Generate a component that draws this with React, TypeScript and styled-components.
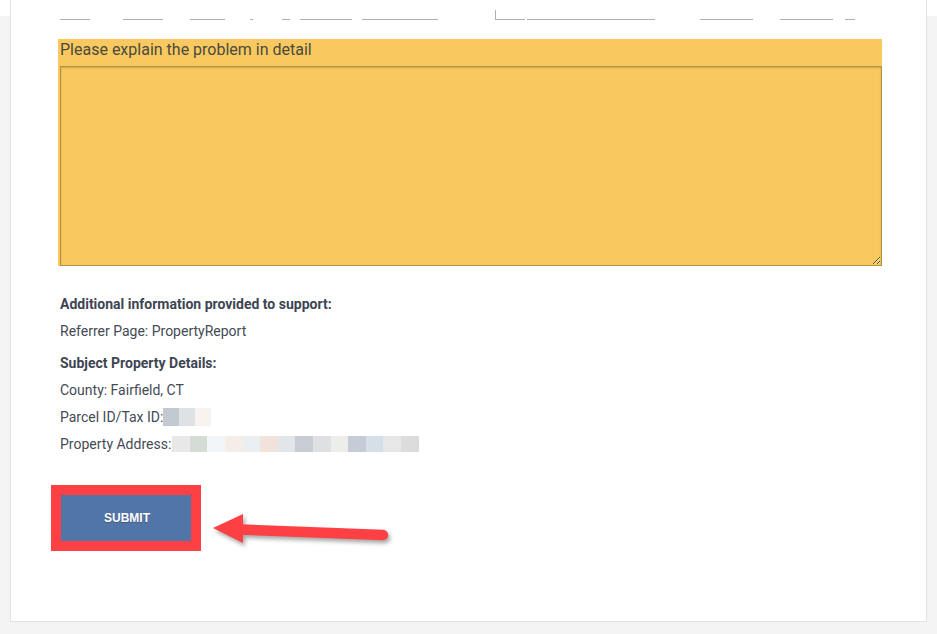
import React from "react";
import styled, { createGlobalStyle } from "styled-components";

const GlobalStyle = createGlobalStyle`
  html, body {
    margin: 0;
    padding: 0;
  }
  body {
    background: linear-gradient(#ffffff 0, #ffffff 16px, #f4f4f4 16px);
    font-family: Roboto, "Liberation Sans", Arial, sans-serif;
    color: #444b55;
    height: 634px;
    overflow: hidden;
  }
`;

const Page = styled.div`
  width: 937px;
  height: 634px;
  box-sizing: border-box;
  padding: 0 10px 0 10px;
`;

const Card = styled.div`
  width: 917px;
  box-sizing: border-box;
  background: #ffffff;
  border: 1px solid #e2e2e2;
  border-top: none;
  padding: 0 44px 70px 47px;
`;

/* bottom edges of the fields scrolled above the form */
const FieldsRow = styled.div`
  display: flex;
  align-items: flex-end;
  height: 20px;
  margin-left: 2px;
`;

const Underline = styled.span<{ $w: number; $gap: number; $tick?: boolean }>`
  display: block;
  width: ${(p) => p.$w}px;
  margin-left: ${(p) => p.$gap}px;
  height: ${(p) => (p.$tick ? "10px" : "1px")};
  border-bottom: 1px solid #b0b0b0;
  border-left: ${(p) => (p.$tick ? "1px solid #b0b0b0" : "none")};
  box-sizing: border-box;
  flex-shrink: 0;
`;

const ProblemPanel = styled.div`
  margin-top: 19px;
  width: 824px;
  background: #f9c95f;
  padding: 0 0 0 2px;
  box-sizing: border-box;
  display: flex;
  flex-direction: column;
`;

const ProblemLabel = styled.label`
  display: block;
  height: 27px;
  line-height: 22px;
  font-size: 16px;
  color: #4a4a40;
`;

const ProblemText = styled.textarea`
  display: block;
  width: 822px;
  height: 200px;
  box-sizing: border-box;
  margin: 0;
  background: #f9c95f;
  border: 1px solid #b3933f;
  box-shadow: inset 0 1px 2px rgba(0, 0, 0, 0.18);
  font-family: Roboto, "Liberation Sans", Arial, sans-serif;
  font-size: 14px;
  resize: both;
  outline: none;
`;

const InfoBlock = styled.div`
  margin-top: 28px;
  padding-left: 2px;
  display: flex;
  flex-direction: column;
  gap: 7px;
`;

const InfoHeading = styled.div<{ $first?: boolean }>`
  font-size: 14px;
  line-height: 20px;
  font-weight: 700;
  color: #3e4552;
  margin-top: ${(p) => (p.$first ? "0" : "5px")};
`;

const InfoLine = styled.div`
  font-size: 14px;
  line-height: 20px;
  color: #444b55;
  display: flex;
  align-items: center;
`;

const Redacted = styled.span<{ $gap: number }>`
  display: inline-flex;
  margin-left: ${(p) => p.$gap}px;
`;

const Pixel = styled.span<{ $c: string; $w: number; $h: number }>`
  display: block;
  width: ${(p) => p.$w}px;
  height: ${(p) => p.$h}px;
  background: ${(p) => p.$c};
`;

const SubmitRow = styled.div`
  position: relative;
  margin-top: 31px;
  height: 66px;
`;

const Highlight = styled.div`
  display: inline-block;
  margin-left: -7px;
  border: 10px solid #fd4043;
`;

const SubmitButton = styled.button`
  display: block;
  width: 130px;
  height: 46px;
  margin: 0;
  padding: 0 0 0 2px;
  border: none;
  background: #5275a8;
  color: #ffffff;
  font-family: "Liberation Sans", Arial, sans-serif;
  font-weight: 700;
  font-size: 12px;
  text-shadow: 0 1px 1px rgba(0, 0, 0, 0.25);
  cursor: pointer;
`;

const ArrowMark = styled.svg`
  position: absolute;
  left: 142px;
  top: 20px;
  overflow: visible;
  filter: drop-shadow(2px 3px 2px rgba(0, 0, 0, 0.35));
`;

const segments: { w: number; gap: number; tick?: boolean }[] = [
  { w: 30, gap: 0 },
  { w: 40, gap: 33 },
  { w: 35, gap: 27 },
  { w: 3, gap: 25 },
  { w: 8, gap: 29 },
  { w: 52, gap: 10 },
  { w: 76, gap: 10 },
  { w: 30, gap: 57, tick: true },
  { w: 128, gap: 2 },
  { w: 53, gap: 45 },
  { w: 53, gap: 27 },
  { w: 10, gap: 12 },
];

const parcelPixels = ["#c3c9d0", "#dfe2e4", "#f8f3ef"];
const addressPixels = [
  "#e8e8e8",
  "#d5dbd5",
  "#f2f6f9",
  "#f5ede8",
  "#e9eff2",
  "#f1e2dc",
  "#e2e6ea",
  "#c8ccd5",
  "#dfe0e3",
  "#eceeea",
  "#c6cbd8",
  "#d5dfe8",
  "#e7e7e7",
  "#dcdcdc",
];

export default function App() {
  return (
    <>
      <GlobalStyle />
      <Page>
        <Card>
          <FieldsRow>
            {segments.map((s, i) => (
              <Underline key={i} $w={s.w} $gap={s.gap} $tick={s.tick} />
            ))}
          </FieldsRow>

          <ProblemPanel>
            <ProblemLabel htmlFor="problem">Please explain the problem in detail</ProblemLabel>
            <ProblemText id="problem" />
          </ProblemPanel>

          <InfoBlock>
            <InfoHeading $first>Additional information provided to support:</InfoHeading>
            <InfoLine>Referrer Page: PropertyReport</InfoLine>
            <InfoHeading>Subject Property Details:</InfoHeading>
            <InfoLine>County: Fairfield, CT</InfoLine>
            <InfoLine>
              Parcel ID/Tax ID:
              <Redacted $gap={0}>
                {parcelPixels.map((c, i) => (
                  <Pixel key={i} $c={c} $w={16} $h={18} />
                ))}
              </Redacted>
            </InfoLine>
            <InfoLine>
              Property Address:
              <Redacted $gap={1}>
                {addressPixels.map((c, i) => (
                  <Pixel key={i} $c={c} $w={17.6} $h={16} />
                ))}
              </Redacted>
            </InfoLine>
          </InfoBlock>

          <SubmitRow>
            <Highlight>
              <SubmitButton type="button">SUBMIT</SubmitButton>
            </Highlight>
            <ArrowMark width="196" height="46" viewBox="0 0 196 46">
              <line
                x1="40"
                y1="24.5"
                x2="183"
                y2="30"
                stroke="#fd4043"
                strokeWidth="10.5"
                strokeLinecap="round"
              />
              <polygon points="13,23 43,9 43,38" fill="#fd4043" />
            </ArrowMark>
          </SubmitRow>
        </Card>
      </Page>
    </>
  );
}
